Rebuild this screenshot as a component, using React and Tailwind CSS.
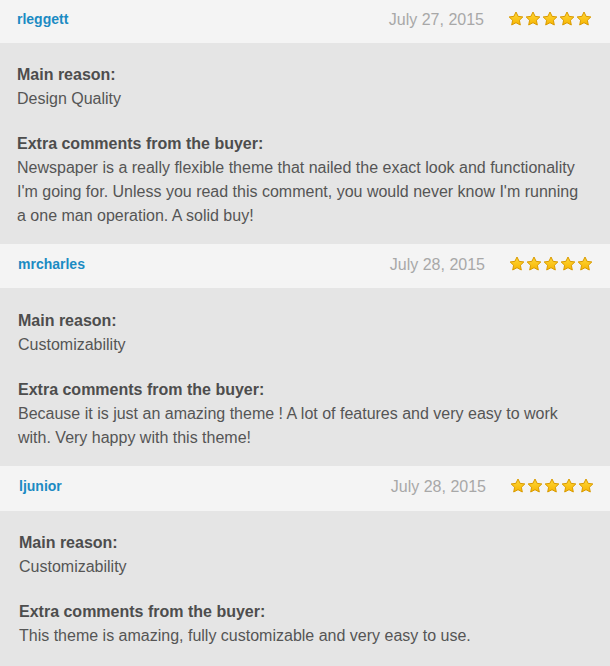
const reviews = [
  {
    user: 'rleggett',
    date: 'July 27, 2015',
    reason: 'Design Quality',
    comment:
      "Newspaper is a really flexible theme that nailed the exact look and functionality I'm going for. Unless you read this comment, you would never know I'm running a one man operation. A solid buy!",
    pad: 'pl-[17px] pr-[18px]',
    head: 'h-[43px] pt-[11px]',
    body: 'pt-[20px] pb-[16px] pl-[17px] pr-[25px]',
  },
  {
    user: 'mrcharles',
    date: 'July 28, 2015',
    reason: 'Customizability',
    comment:
      'Because it is just an amazing theme ! A lot of features and very easy to work with. Very happy with this theme!',
    pad: 'pl-[18px] pr-[17px]',
    head: 'h-[44px] pt-[12px]',
    body: 'pt-[21px] pb-[16px] pl-[18px] pr-[24px]',
  },
  {
    user: 'ljunior',
    date: 'July 28, 2015',
    reason: 'Customizability',
    comment: 'This theme is amazing, fully customizable and very easy to use.',
    pad: 'pl-[19px] pr-[16px]',
    head: 'h-[45px] pt-[12px]',
    body: 'pt-[20px] pb-[19px] pl-[19px] pr-[23px]',
  },
];

function Star() {
  return (
    <svg width="16" height="16" viewBox="0 0 16 16">
      <defs>
        <linearGradient id="sg" x1="0" y1="0" x2="0" y2="1">
          <stop offset="0" stopColor="#ffd83a" />
          <stop offset="1" stopColor="#f7b500" />
        </linearGradient>
      </defs>
      <path
        d="M8 1l2.1 4.35 4.75.6-3.45 3.3.9 4.75L8 11.7 3.7 14l.9-4.75L1.15 5.95l4.75-.6z"
        fill="url(#sg)"
        stroke="#d99a00"
        strokeWidth="1"
        strokeLinejoin="round"
      />
    </svg>
  );
}

function Review({ r }) {
  return (
    <div>
      <div className={`flex items-start justify-between bg-[#f4f4f4] ${r.pad} ${r.head}`}>
        <span className="text-[14px] leading-[16px] font-bold text-[#1b8bc3]">{r.user}</span>
        <div className="flex items-center">
          <span className="text-[16px] leading-[18px] text-[#a8a8a8]">{r.date}</span>
          <div className="ml-[24px] flex gap-[1px] -mt-[2px]">
            {[0, 1, 2, 3, 4].map((i) => (
              <Star key={i} />
            ))}
          </div>
        </div>
      </div>
      <div className={`bg-[#e5e5e5] text-[16px] leading-[24px] text-[#555] ${r.body}`}>
        <div className="font-bold text-[#4d4d4d]">Main reason:</div>
        <div>{r.reason}</div>
        <div className="mt-[21px] font-bold text-[#4d4d4d]">Extra comments from the buyer:</div>
        <div>{r.comment}</div>
      </div>
    </div>
  );
}

export default function App() {
  return (
    <div className="w-[610px] h-[666px] overflow-hidden bg-[#e5e5e5] font-['Liberation_Sans',Arial,sans-serif]">
      {reviews.map((r) => (
        <Review key={r.user} r={r} />
      ))}
    </div>
  );
}
